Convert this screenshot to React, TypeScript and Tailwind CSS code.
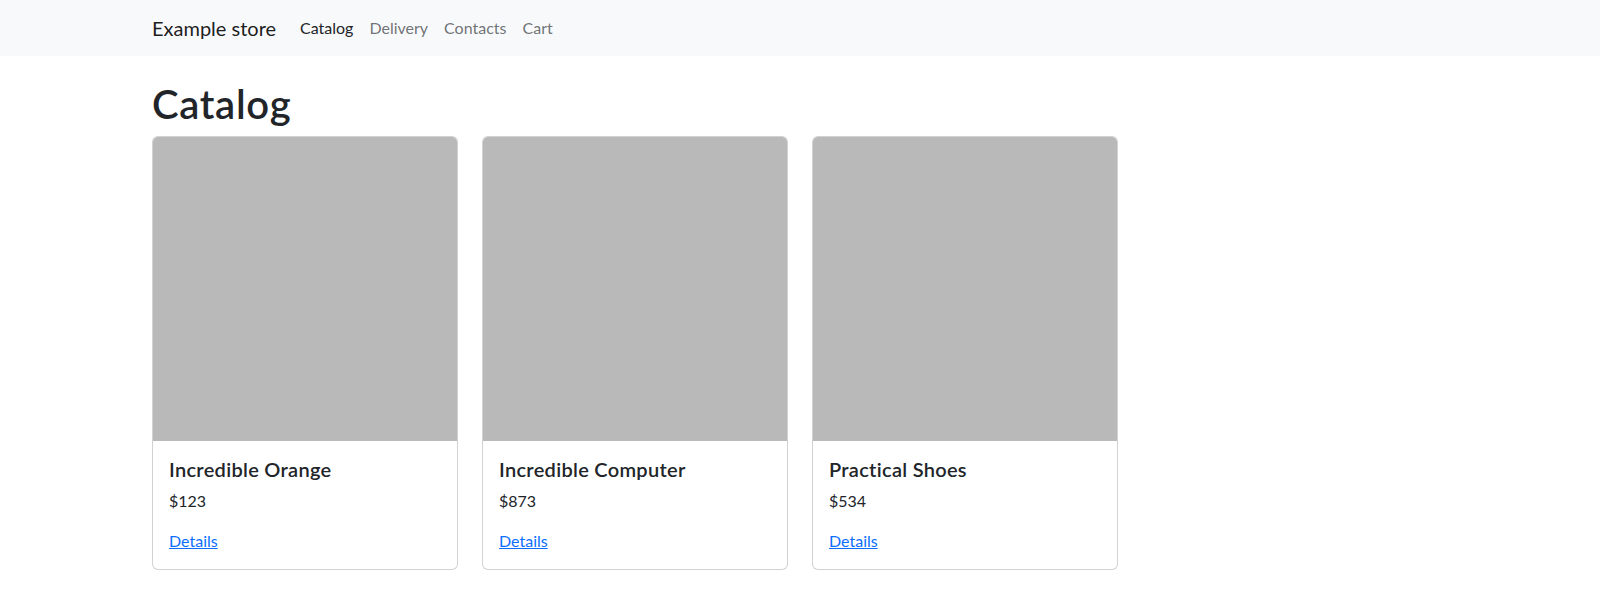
import React from "react";

const products = [
  { name: "Incredible Orange", price: "$123" },
  { name: "Incredible Computer", price: "$873" },
  { name: "Practical Shoes", price: "$534" },
];

export default function App() {
  return (
    <div
      className="min-h-[594px] bg-white text-[#212529]"
      style={{ fontFamily: 'Lato, "Open Sans", sans-serif' }}
    >
      <nav className="bg-[#f8f9fa] py-2">
        <div className="mx-auto flex w-[1320px] items-center px-3">
          <a className="mr-4 py-[5px] text-[20px] leading-[30px] text-[rgba(0,0,0,0.9)]">
            Example store
          </a>
          <div className="flex text-[16px] leading-6">
            <a className="px-2 py-2 text-[#212529]">Catalog</a>
            <a className="px-2 py-2 text-[rgba(33,37,41,0.65)]">Delivery</a>
            <a className="px-2 py-2 text-[rgba(33,37,41,0.65)]">Contacts</a>
            <a className="px-2 py-2 text-[rgba(33,37,41,0.65)]">Cart</a>
          </div>
        </div>
      </nav>
      <main className="mx-auto w-[1320px] px-3">
        <h1 className="mt-6 mb-2 text-[40px] font-semibold leading-[48px] tracking-[0.7px]">
          Catalog
        </h1>
        <div className="grid grid-cols-4 gap-6">
          {products.map((p) => (
            <div
              key={p.name}
              className="flex flex-col overflow-hidden rounded-[6px] border border-[rgba(0,0,0,0.175)] bg-white"
            >
              <div className="h-[304px] bg-[#b9b9b9]" />
              <div className="p-4">
                <h5 className="mb-2 text-[20px] font-semibold leading-6 tracking-[0.3px]">
                  {p.name}
                </h5>
                <p className="mb-4 text-[16px] leading-6">{p.price}</p>
                <a className="text-[16px] leading-6 text-[#0d6efd] underline">Details</a>
              </div>
            </div>
          ))}
        </div>
      </main>
    </div>
  );
}
